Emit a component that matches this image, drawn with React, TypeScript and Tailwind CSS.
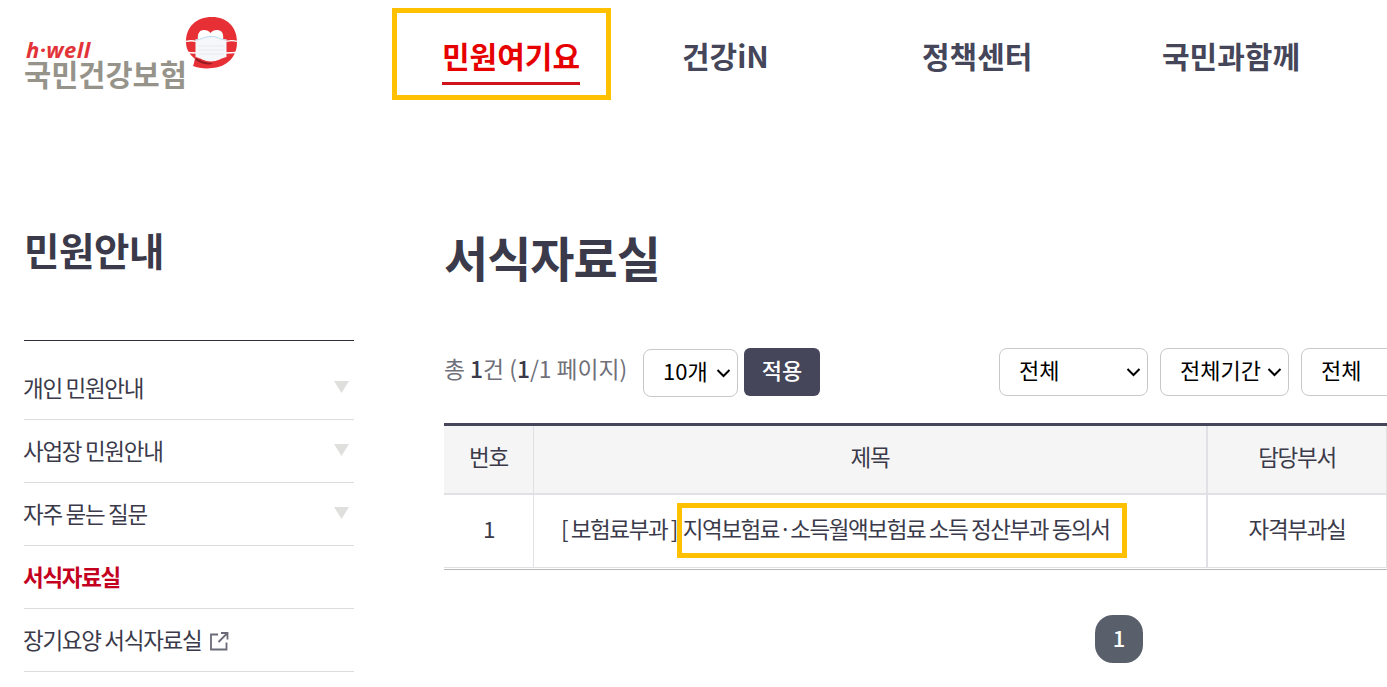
import React from 'react';

interface MenuItem {
    label: string;
    active?: boolean;
    expandable?: boolean;
    external?: boolean;
}

interface SelectBoxProps {
    label: string;
    className?: string;
}

const NAV_ITEMS = ['민원여기요', '건강iN', '정책센터', '국민과함께'];

const MENU_ITEMS: MenuItem[] = [
    { label: '개인 민원안내', expandable: true },
    { label: '사업장 민원안내', expandable: true },
    { label: '자주 묻는 질문', expandable: true },
    { label: '서식자료실', active: true },
    { label: '장기요양 서식자료실', external: true }
];

function Logo() {
    return (
        <div className="relative w-[214px] h-[76px]">
            <div className="pt-[22px] pl-[2px] text-[22px] leading-[20px] font-bold italic text-[#e23338] font-['Open_Sans',sans-serif] tracking-[0.4px]">
                h·well
            </div>
            <div className="text-[29.5px] leading-[28px] font-bold text-[#96948a] whitespace-nowrap">국민건강보험</div>
            <svg className="absolute left-[162px] top-0" width="52" height="52" viewBox="0 0 52 52">
                <path d="M26 0C10 0 0 10 0 25c0 7 3 12 9 17-1 3-1 5-2 7 5 2 13 3 19 2 15-1 25-11 25-26C51 10 41 0 26 0Z" fill="#e63035" />
                <path d="M12 23c-1-7 2-10 6-10 3 0 5 1 6.500 3C26 14 28 13 31 13c5 0 7 4 6 10Z" fill="#fff" />
                <path d="M10 41c5 3 10 5 17 5l-3 1.500c-6 0-11-2-15-5Z" fill="#8f1c20" />
                <path d="M0 24.300c4-.8 7-.8 10 0M40 24.300c4-.8 8-.8 11 0M1 35.500l9 .5M40 36l10-.5" stroke="#fff" strokeWidth="1.300" fill="none" />
                <path d="M9.500 22.500c6 0 8-3.500 15.500-3.500s9.500 3.500 15.500 3.500v17.500C35 41 32 44.500 25 44.500S15 41 9.500 40Z" fill="#f5f7fa" />
                <path d="M9.500 23c6 0 8-3.500 15.500-3.500s9.500 3.500 15.500 3.500" stroke="#b9dcf0" fill="none" />
                <path d="M12 29h26M12 33h26M12 37h26" stroke="#e6e9ef" fill="none" />
            </svg>
        </div>
    );
}

function SelectBox({ label, className = '' }: SelectBoxProps) {
    return (
        <button
            type="button"
            className={`flex items-center justify-between shrink-0 h-12 pl-[19px] pr-[6px] border border-[#c8c8c8] rounded-lg bg-white text-black text-[22px] leading-[30px] whitespace-nowrap ${className}`}
        >
            <span className="pb-[6px]">{label}</span>
            <svg width="15" height="10" viewBox="0 0 15 10" fill="none">
                <path d="M1.500 2l6 6 6-6" stroke="#000" strokeWidth="2" />
            </svg>
        </button>
    );
}

function Sidebar() {
    return (
        <aside className="w-[330px] shrink-0">
            <h2 className="h-[116px] text-[38.5px] leading-[50px] font-bold tracking-[-0.4px] text-[#3b3a4a]">민원안내</h2>
            <ul className="border-t border-[#2f2e3b] pt-[16px]">
                {MENU_ITEMS.map((item) => (
                    <li
                        key={item.label}
                        className="flex items-center justify-between h-[63px] border-b border-[#dddddf] text-[22.5px] tracking-[-1.3px]"
                    >
                        <a className={`flex items-center pb-px ml-[-1px] ${item.active ? 'font-bold text-[#c4001f]' : 'text-[#3b3a4a]'}`}>
                            {item.label}
                            {item.external && (
                                <svg className="ml-[9px] mt-[3px]" width="19" height="19" viewBox="0 0 19 19" fill="none" stroke="#6b6a78" strokeWidth="1.800">
                                    <path d="M8 2.500H1v15h15.500v-7M11 1h6.500v6.500M17 1.500L8.500 10" />
                                </svg>
                            )}
                        </a>
                        {item.expandable && (
                            <svg className="mr-[5px] mb-[2px]" width="15" height="12" viewBox="0 0 15 12">
                                <path d="M0 0h15L7.500 12Z" fill="#dfdfdd" />
                            </svg>
                        )}
                    </li>
                ))}
            </ul>
        </aside>
    );
}

function FormTable() {
    return (
        <div className="pb-px border-b border-[#b9b9bc]">
            <table className="w-[943px] table-fixed border-separate border-spacing-0 border-t-3 border-[#45465a] text-[22.5px] tracking-[-1.3px] text-[#3b3a4a]">
                <colgroup>
                    <col className="w-[90px]" />
                    <col className="w-[674px]" />
                    <col className="w-[179px]" />
                </colgroup>
                <thead>
                    <tr className="h-[69px] bg-[#f5f5f5]">
                        <th className="p-0 pb-[5px] font-normal border-b-2 border-r border-[#e1e1e5]">번호</th>
                        <th className="p-0 pb-[5px] font-normal border-b-2 border-r-2 border-[#e1e1e5]">제목</th>
                        <th className="p-0 pb-[5px] font-normal border-b-2 border-r border-[#e1e1e5]">담당부서</th>
                    </tr>
                </thead>
                <tbody>
                    <tr className="h-[73px]">
                        <td className="p-0 pb-[5px] text-center border-b border-r border-[#e1e1e5]">1</td>
                        <td className="p-0 pb-[5px] pl-[27px] tracking-[-1.42px] whitespace-nowrap border-b border-r-2 border-[#e1e1e5]">
                            [ 보험료부과 ]{' '}
                            <span className="relative ml-[2px]">
                                지역보험료·소득월액보험료 소득 정산부과 동의서
                                <span className="absolute left-[-6px] top-[-9px] w-[450px] h-[55px] border-[5px] border-[#ffc000]" />
                            </span>
                        </td>
                        <td className="p-0 pb-[5px] text-center border-b border-r border-[#e1e1e5]">자격부과실</td>
                    </tr>
                </tbody>
            </table>
        </div>
    );
}

export default function App() {
    return (
        <div className="w-[1387px] h-[687px] overflow-hidden bg-white font-['Noto_Sans_CJK_KR',sans-serif]">
            <header className="flex h-[224px] pl-6">
                <div className="w-[418px] shrink-0 pt-[17px]">
                    <Logo />
                </div>
                <nav className="flex pt-[35px]">
                    {NAV_ITEMS.map((item, index) => (
                        <div key={item} className="relative w-[240px] shrink-0">
                            <a
                                className={`inline-block h-[50px] text-[30px] leading-[40px] font-bold ${index === 0 ? 'border-b-3 border-[#d0121b] text-[#e60000]' : 'text-[#45465a]'}`}
                            >
                                {item}
                            </a>
                            {index === 0 && <span className="absolute left-[-50px] top-[-27px] w-[219px] h-[92px] border-[5px] border-[#ffc000]" />}
                        </div>
                    ))}
                </nav>
            </header>
            <div className="flex gap-[90px] pl-6">
                <Sidebar />
                <main className="w-[943px] shrink-0">
                    <h1 className="h-[124px] text-[48px] leading-[65px] font-bold tracking-[-1px] text-[#3b3a4a]">서식자료실</h1>
                    <div className="flex items-start h-[75px]">
                        <p className="w-[199px] shrink-0 pt-[5px] pl-0 text-[22.8px] leading-[32px] text-[#70707a] whitespace-nowrap">
                            총 <b className="font-medium text-[#3b3a4a]">1</b>건 (<b className="font-medium text-[#3b3a4a]">1</b>/1 페이지)
                        </p>
                        <SelectBox label="10개" className="w-[95px] mt-px" />
                        <button type="button" className="ml-[6px] w-[76px] h-12 shrink-0 pb-[5px] rounded-md bg-[#45465a] text-white text-[22px] font-medium">
                            적용
                        </button>
                        <div className="flex gap-3 ml-[179px]">
                            <SelectBox label="전체" className="w-[149px]" />
                            <SelectBox label="전체기간" className="w-[129px]" />
                            <SelectBox label="전체" className="w-[149px]" />
                        </div>
                    </div>
                    <FormTable />
                    <div className="flex justify-center mt-[45px] pl-[407px]">
                        <span className="w-12 h-12 rounded-[18px] bg-[#59606b] text-center text-white text-[22px] leading-[44px] font-medium">1</span>
                    </div>
                </main>
            </div>
        </div>
    );
}
